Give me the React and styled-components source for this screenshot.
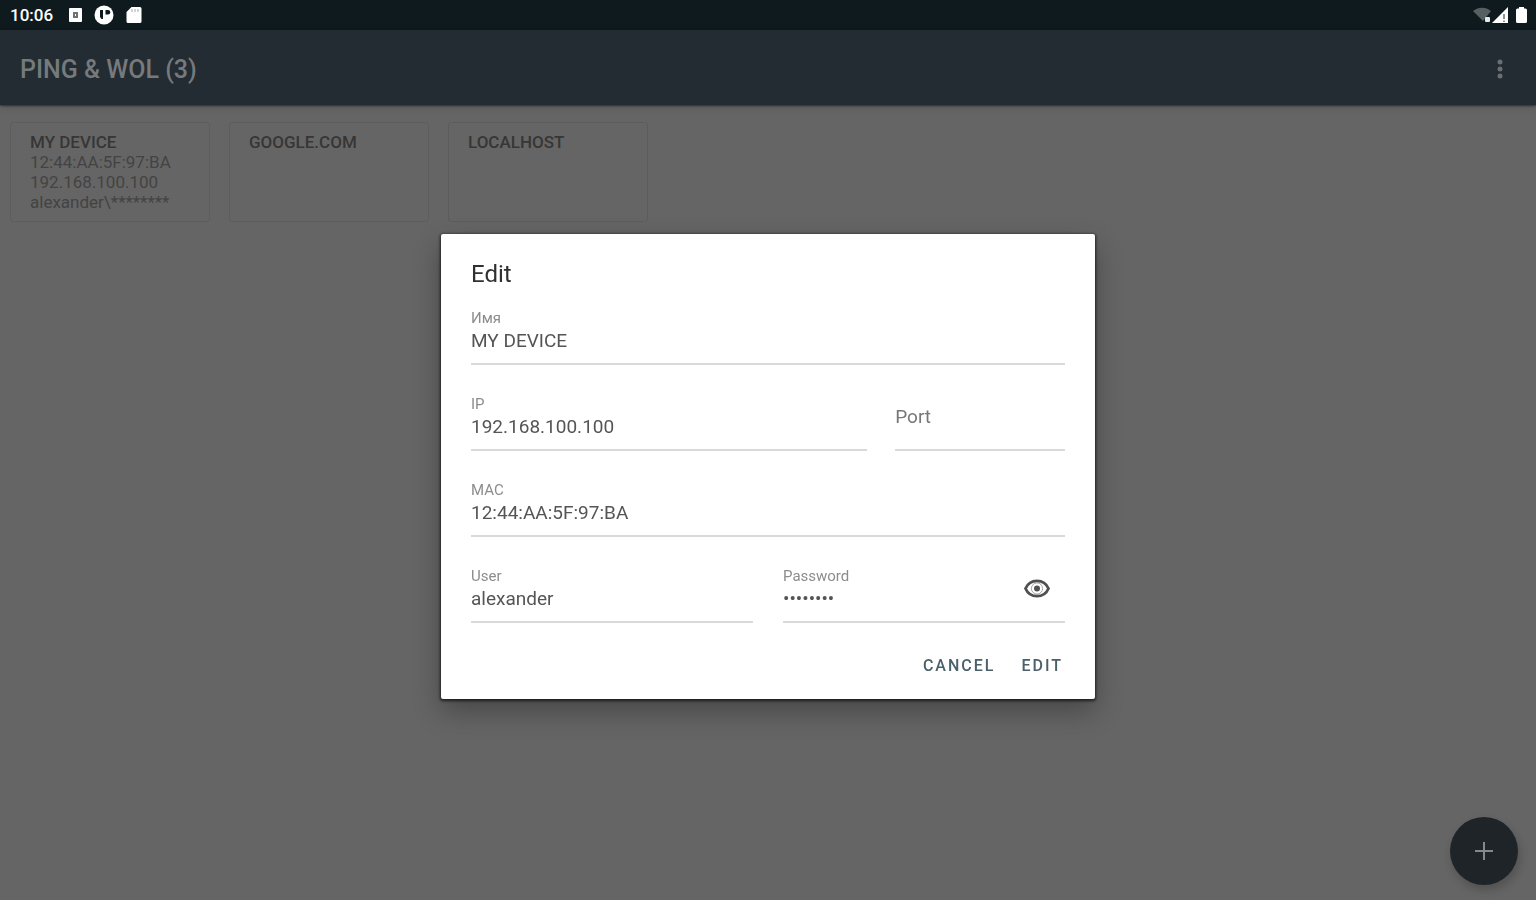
import React from "react";
import styled, { createGlobalStyle } from "styled-components";

const GlobalStyle = createGlobalStyle`
  *, *::before, *::after { box-sizing: border-box; }
  body {
    margin: 0;
    background: #666565;
    font-family: Roboto, "Liberation Sans", sans-serif;
  }
  button, input { font-family: inherit; }
`;

const Screen = styled.div`
  min-height: 100vh;
  display: flex;
  flex-direction: column;
`;

const StatusBar = styled.div`
  display: flex;
  align-items: center;
  justify-content: space-between;
  height: 30px;
  padding: 0 8px 0 10px;
  background: #0f1a1e;
  color: #fff;
`;

const StatusGroup = styled.div`
  display: flex;
  align-items: center;
  gap: ${(p) => p.$gap};
`;

const Clock = styled.span`
  font-size: 17px;
  font-weight: 500;
  line-height: 20px;
  margin-right: 4px;
`;

const AppBar = styled.header`
  display: flex;
  align-items: center;
  justify-content: space-between;
  height: 75px;
  padding: 4px 20px 0;
  background: #232c32;
  box-shadow: 0 1px 2px rgba(20, 30, 30, 0.7), 0 3px 8px rgba(0, 0, 0, 0.1);
`;

const AppTitle = styled.h1`
  margin: 0;
  color: #767a7c;
  font-size: 25px;
  font-weight: 500;
  line-height: 28px;
`;

const MenuButton = styled.button`
  display: grid;
  place-items: center;
  width: 32px;
  height: 32px;
  padding: 0;
  border: 0;
  background: none;
  color: #6a7072;
`;

const Devices = styled.main`
  display: flex;
  flex-wrap: wrap;
  gap: 19px;
  padding: 17px 10px;
`;

const DeviceCard = styled.article`
  width: 200px;
  height: 100px;
  padding: 9px 19px;
  border: 1px solid #5d5d5d;
  border-radius: 3px;
  color: #434343;
  font-size: 17px;
  line-height: 20px;
`;

const DeviceName = styled.h2`
  margin: 0;
  color: #363636;
  font-size: 17px;
  font-weight: 500;
  line-height: 20px;
`;

const DeviceLine = styled.div``;

const AddButton = styled.button`
  position: fixed;
  right: 18px;
  bottom: 15px;
  display: grid;
  place-items: center;
  width: 68px;
  height: 68px;
  padding: 0;
  border: 0;
  border-radius: 50%;
  background: #1e2427;
  color: #85898b;
  box-shadow: 2px 5px 10px rgba(0, 0, 0, 0.2);
`;

const Overlay = styled.div`
  position: fixed;
  inset: 33px 0 0;
  display: grid;
  place-items: center;
`;

const Dialog = styled.form`
  width: 100%;
  max-width: 654px;
  padding: 26px 30px 15px;
  border-radius: 2px;
  background: #fff;
  box-shadow: 0 1px 3px 1px rgba(0, 0, 0, 0.65), 0 12px 28px rgba(0, 0, 0, 0.3);
`;

const DialogTitle = styled.h2`
  margin: 0 0 21px;
  color: #303030;
  font-size: 24px;
  font-weight: 400;
  line-height: 28px;
`;

const Fields = styled.div`
  display: grid;
  gap: 30px;
`;

const FieldRow = styled.div`
  display: grid;
  grid-template-columns: ${(p) => p.$columns || "1fr"};
  column-gap: ${(p) => p.$gap || "0"};
`;

const FieldBox = styled.div`
  position: relative;
  display: flex;
  flex-direction: column;
  gap: 2px;
  height: 56px;
  border-bottom: 2px solid #d9d9d9;
`;

const FieldLabel = styled.label`
  color: #8c8c8c;
  font-size: 15px;
  line-height: 18px;
`;

const FieldInput = styled.input`
  width: 100%;
  height: ${(p) => (p.$empty ? "42px" : "24px")};
  padding: 0;
  border: 0;
  outline: 0;
  background: none;
  color: #555;
  font-size: 19px;
  line-height: 24px;

  &::placeholder { color: #777; opacity: 1; }
`;

const RevealButton = styled.button`
  position: absolute;
  top: 8px;
  right: 14px;
  display: flex;
  padding: 0;
  border: 0;
  background: none;
  color: #505050;
`;

const Actions = styled.div`
  display: flex;
  justify-content: flex-end;
  gap: 10px;
  margin-top: 25px;
  margin-right: -6px;
`;

const ActionButton = styled.button`
  height: 36px;
  padding: 0 8px;
  border: 0;
  background: none;
  color: #4b6069;
  font-size: 16px;
  font-weight: 500;
  line-height: 20px;
  letter-spacing: 2px;
`;

const devices = [
  { name: "MY DEVICE", lines: ["12:44:AA:5F:97:BA", "192.168.100.100", "alexander\\********"] },
  { name: "GOOGLE.COM", lines: [] },
  { name: "LOCALHOST", lines: [] },
];

function Field({ id, label, value, type = "text", children }) {
  return (
    <FieldBox>
      {value && <FieldLabel htmlFor={id}>{label}</FieldLabel>}
      <FieldInput
        id={id}
        type={type}
        defaultValue={value}
        $empty={!value}
        placeholder={value ? undefined : label}
        aria-label={value ? undefined : label}
        autoComplete="off"
        spellCheck={false}
      />
      {children}
    </FieldBox>
  );
}

function StatusIcons() {
  return (
    <>
      <StatusGroup $gap="12px">
        <Clock>10:06</Clock>
        <svg width="13" height="16" viewBox="0 0 13 16">
          <rect x="0" y="1" width="13" height="14" rx="1" fill="#fff" />
          <rect x="4" y="5" width="5" height="6" fill="#6d7375" />
          <rect x="6" y="7" width="1" height="2" fill="#fff" />
        </svg>
        <svg width="20" height="20" viewBox="0 0 20 20">
          <circle cx="10" cy="10" r="9.5" fill="#fff" />
          <path d="M6 5h3v9H7.500L6 12z" fill="#0f1a1e" />
          <path d="M11.500 5H14a2 2 0 0 1 0 4.500h-2.500z" fill="#0f1a1e" />
        </svg>
        <svg width="16" height="18" viewBox="0 0 16 18">
          <path d="M5.500 1H14a1.500 1.500 0 0 1 1.500 1.500v13A1.500 1.500 0 0 1 14 17H2a1.500 1.500 0 0 1-1.500-1.500V6z" fill="#fff" />
          <path d="M6 3v3M9 3v3M12 3v3" stroke="#a5a9aa" strokeWidth="1" />
        </svg>
      </StatusGroup>
      <StatusGroup $gap="0px">
        <svg width="19" height="18" viewBox="0 0 19 18">
          <path d="M0 5C5 .5 13 .5 18 5l-4 5-4 5z" fill="#566063" />
          <rect x="12" y="11" width="5" height="5" rx="1" fill="#e8eaea" />
        </svg>
        <svg width="17" height="18" viewBox="0 0 17 18">
          <path d="M0 17 16 1v16z" fill="#fff" />
          <path d="M12 8v5M12 14.500v1.500" stroke="#657073" strokeWidth="1.500" />
        </svg>
        <svg width="19" height="18" viewBox="0 0 19 18">
          <path d="M10 1h5v1.500h1.500A1.500 1.500 0 0 1 18 4v11.500a1.500 1.500 0 0 1-1.500 1.500h-8A1.500 1.500 0 0 1 7 15.500V4a1.500 1.500 0 0 1 1.500-1.500H10z" fill="#fff" />
        </svg>
      </StatusGroup>
    </>
  );
}

export default function App() {
  return (
    <Screen>
      <GlobalStyle />
      <StatusBar>
        <StatusIcons />
      </StatusBar>
      <AppBar>
        <AppTitle>PING &amp; WOL (3)</AppTitle>
        <MenuButton type="button" aria-label="More options">
          <svg width="6" height="24" viewBox="0 0 6 24" fill="currentColor">
            <circle cx="3" cy="4" r="2.500" />
            <circle cx="3" cy="11" r="2.500" />
            <circle cx="3" cy="18" r="2.500" />
          </svg>
        </MenuButton>
      </AppBar>
      <Devices>
        {devices.map((device) => (
          <DeviceCard key={device.name}>
            <DeviceName>{device.name}</DeviceName>
            {device.lines.map((line) => (
              <DeviceLine key={line}>{line}</DeviceLine>
            ))}
          </DeviceCard>
        ))}
      </Devices>
      <AddButton type="button" aria-label="Add device">
        <svg width="18" height="18" viewBox="0 0 18 18">
          <path d="M9 0v18M0 9h18" stroke="currentColor" strokeWidth="2" />
        </svg>
      </AddButton>
      <Overlay>
        <Dialog role="dialog" aria-labelledby="dialog-title" onSubmit={(e) => e.preventDefault()}>
          <DialogTitle id="dialog-title">Edit</DialogTitle>
          <Fields>
            <FieldRow>
              <Field id="name" label="Имя" value="MY DEVICE" />
            </FieldRow>
            <FieldRow $columns="7fr 3fr" $gap="28px">
              <Field id="ip" label="IP" value="192.168.100.100" />
              <Field id="port" label="Port" />
            </FieldRow>
            <FieldRow>
              <Field id="mac" label="MAC" value="12:44:AA:5F:97:BA" />
            </FieldRow>
            <FieldRow $columns="1fr 1fr" $gap="30px">
              <Field id="user" label="User" value="alexander" />
              <Field id="password" label="Password" value="password" type="password">
                <RevealButton type="button" aria-label="Show password">
                  <svg width="28" height="28" viewBox="0 0 28 28">
                    <path
                      d="M2.500 13.500C4.600 8.600 8.900 5.800 14 5.800s9.400 2.800 11.500 7.700c-2.100 4.900-6.400 7.700-11.500 7.700S4.600 18.400 2.500 13.500z"
                      fill="none"
                      stroke="currentColor"
                      strokeWidth="2.800"
                    />
                    <circle cx="14" cy="13.500" r="5.600" fill="none" stroke="currentColor" strokeWidth="1" opacity="0.500" />
                    <circle cx="14" cy="13.500" r="3" fill="currentColor" />
                  </svg>
                </RevealButton>
              </Field>
            </FieldRow>
          </Fields>
          <Actions>
            <ActionButton type="button">CANCEL</ActionButton>
            <ActionButton type="submit">EDIT</ActionButton>
          </Actions>
        </Dialog>
      </Overlay>
    </Screen>
  );
}
